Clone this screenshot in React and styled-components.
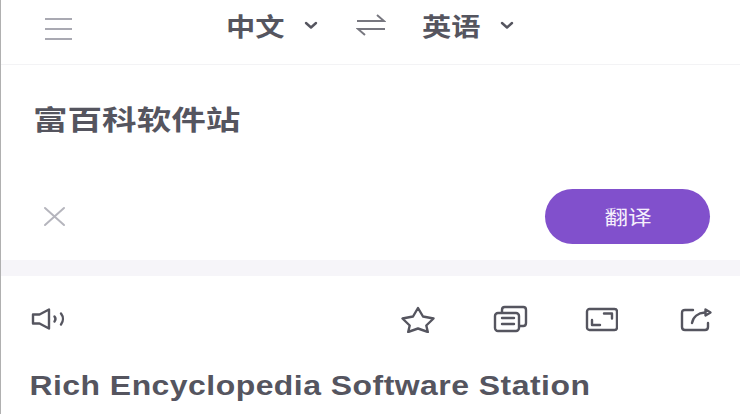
import React from 'react';
import styled, { createGlobalStyle } from 'styled-components';

const GlobalStyle = createGlobalStyle`
  html, body {
    margin: 0;
    padding: 0;
    background: #fff;
  }
  body {
    font-family: "Roboto", "Noto Sans CJK SC", sans-serif;
  }
`;

const Page = styled.div`
  width: 740px;
  height: 414px;
  box-sizing: border-box;
  border-left: 1px solid #b0b0b0;
  overflow: hidden;
  display: flex;
  flex-direction: column;
`;

const Header = styled.header`
  height: 65px;
  flex: none;
  box-sizing: border-box;
  border-bottom: 1px solid #f3f3f5;
  padding: 0 0 14px 44px;
  display: flex;
  align-items: center;
`;

const MenuButton = styled.div`
  width: 27px;
  height: 22px;
  display: flex;
  flex-direction: column;
  justify-content: space-between;
  margin-top: 8px;
  margin-right: 154px;
`;

const MenuLine = styled.span`
  height: 2px;
  background: #a9a9b2;
`;

const Lang = styled.div`
  display: flex;
  align-items: center;
  gap: 20px;
  color: #55555f;
`;

const LangText = styled.span`
  display: inline-block;
  font: 700 25px/1 "Noto Sans CJK SC", sans-serif;
  transform: scaleX(1.17);
  transform-origin: left center;
  width: 58px;
  white-space: nowrap;
`;

const Swap = styled.svg`
  width: 30px;
  height: 22px;
  margin: 0 36px 0 38px;
`;

const InputArea = styled.section`
  height: 195px;
  flex: none;
  box-sizing: border-box;
  padding: 34px 30px 0 32px;
  display: flex;
  flex-direction: column;
`;

const Source = styled.div`
  font: 700 27px/40px "Noto Sans CJK SC", sans-serif;
  color: #55555f;
  transform: scaleX(1.28);
  transform-origin: left center;
  white-space: nowrap;
`;

const ActionRow = styled.div`
  margin-top: 50px;
  display: flex;
  align-items: center;
  justify-content: space-between;
  padding-left: 10px;
`;

const TranslateButton = styled.button`
  width: 165px;
  height: 55px;
  border: none;
  border-radius: 28px;
  background: #8150cc;
  color: #f5effc;
  display: flex;
  align-items: center;
  justify-content: center;
  padding: 0;
`;

const ButtonText = styled.span`
  font: 400 20px/1 "Noto Sans CJK SC", sans-serif;
  transform: scaleX(1.18);
`;

const Divider = styled.div`
  height: 16px;
  flex: none;
  background: #f6f5f9;
`;

const Toolbar = styled.div`
  height: 94px;
  flex: none;
  box-sizing: border-box;
  padding: 0 27px 8px 30px;
  display: flex;
  align-items: center;
`;

const ToolIcons = styled.div`
  margin-left: auto;
  display: flex;
  align-items: center;
  gap: 57px;
`;

const Result = styled.div`
  padding-left: 24px;
  font: 700 27px/32px "Liberation Sans", Arial, sans-serif;
  color: #55555f;
  white-space: nowrap;
  letter-spacing: 0.4px;
  transform: scaleX(1.183);
  transform-origin: left center;
`;

const Icon = styled.svg`
  display: block;
  fill: none;
  stroke: ${props => props.$color || '#55555f'};
  stroke-width: ${props => props.$weight || 2.4};
  stroke-linecap: round;
  stroke-linejoin: round;
`;

const Chevron = () => (
  <Icon width="14" height="9" viewBox="0 0 14 9" $weight={2.4}>
    <path d="M2 2l5 4.500L12 2" />
  </Icon>
);

export default function App() {
  return (
    <Page>
      <GlobalStyle />
      <Header>
        <MenuButton>
          <MenuLine />
          <MenuLine />
          <MenuLine />
        </MenuButton>
        <Lang>
          <LangText>中文</LangText>
          <Chevron />
        </Lang>
        <Swap viewBox="0 0 30 22" fill="none" stroke="#77777f" strokeWidth="2">
          <path d="M1 7h27L21 1" />
          <path d="M29 15H2l7 6" />
        </Swap>
        <Lang>
          <LangText>英语</LangText>
          <Chevron />
        </Lang>
      </Header>
      <InputArea>
        <Source>富百科软件站</Source>
        <ActionRow>
          <Icon width="23" height="23" viewBox="0 0 23 23" $color="#b5b5bd" $weight={2}>
            <path d="M2 3l19 17M21 3L2 20" />
          </Icon>
          <TranslateButton>
            <ButtonText>翻译</ButtonText>
          </TranslateButton>
        </ActionRow>
      </InputArea>
      <Divider />
      <Toolbar>
        <Icon width="36" height="22" viewBox="0 0 36 22">
          <path d="M2 6.500h6.500L18 1.500v19L8.500 15.500H2z" />
          <path d="M23.500 8.500c1.200 1.500 1.200 3.500 0 5" />
          <path d="M30 5.500c2.500 3.200 2.500 7.800 0 11" />
        </Icon>
        <ToolIcons>
          <Icon width="36" height="27" viewBox="0 0 36 27">
            <path d="M18 2l5 8.500 10.500 2-7.200 7 1.500 6.500L18 22.500 8.200 26l1.500-6.500-7.200-7 10.500-2z" />
          </Icon>
          <Icon width="35" height="30" viewBox="0 0 35 30">
            <rect x="2" y="9" width="24" height="18" rx="3" />
            <path d="M9 8V6C9 4.300 10 3 11.700 3H30.300C32 3 33 4.300 33 6V19C33 20.700 32 22 30.300 22H27" />
            <path d="M9 14h12M9 20h12" />
          </Icon>
          <Icon width="33" height="25" viewBox="0 0 33 25">
            <rect x="2" y="2" width="30" height="21" rx="2.500" />
            <path d="M19 6.500h8v5M7 13v5h8" />
          </Icon>
          <Icon width="38" height="26" viewBox="-5 0 38 26">
            <path d="M13 4H5C3 4 2 5 2 7v14c0 2 1 3 3 3h20c2 0 3-1 3-3v-4" />
            <path d="M12 17c1-6 6-10 13-10.500" />
            <path d="M25.500 3.500l5 3-5 3z" />
          </Icon>
        </ToolIcons>
      </Toolbar>
      <Result>Rich Encyclopedia Software Station</Result>
    </Page>
  );
}
